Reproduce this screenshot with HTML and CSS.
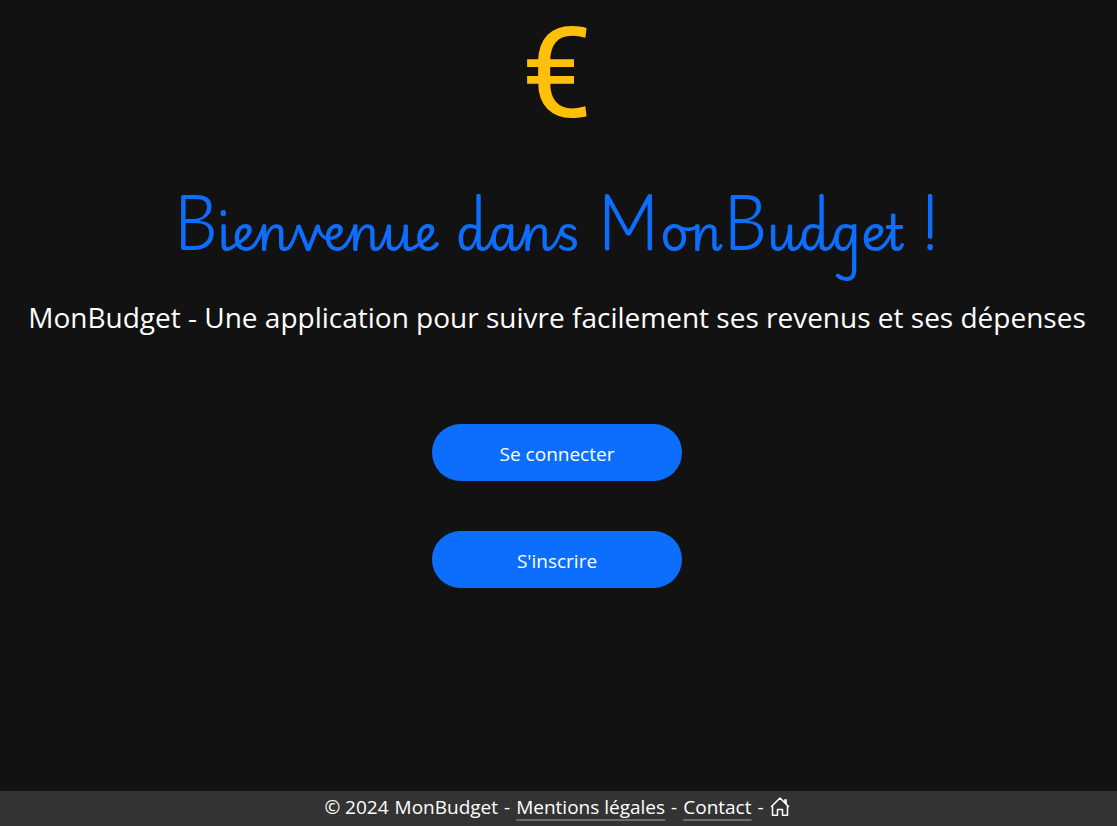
FILE: index.html
```html
<!DOCTYPE html>
<html lang="fr">
<head>
<meta charset="utf-8">
<meta name="viewport" content="width=device-width, initial-scale=1">
<title>MonBudget</title>
<link rel="stylesheet" href="styles.css">
</head>
<body>
<main class="home">
  <div class="logo">€</div>
  <h1 class="title">Bienvenue dans MonBudget !</h1>
  <p class="tagline">MonBudget - Une application pour suivre facilement ses revenus et ses dépenses</p>
  <div class="actions">
    <button type="button" class="button">Se connecter</button>
    <button type="button" class="button">S'inscrire</button>
  </div>
</main>
<footer class="footer">
  <span>© 2024</span>
  <span>MonBudget</span>
  <span>-</span>
  <a class="link" href="#mentions">Mentions légales</a>
  <span>-</span>
  <a class="link" href="#contact">Contact</a>
  <span>-</span>
  <a class="home-link" href="#accueil" aria-label="Accueil"><svg class="icon" viewBox="0 0 20 20" fill="none" stroke="currentColor" stroke-width="1.5" stroke-linejoin="round" stroke-linecap="round"><path d="M1.500 9.500 10 1l8.500 8.500M2.500 8.700V18.200H7.500V12.500H12.500V18.200H17.500V8.700"/><path d="M14.200 2.200H16.800V7.500L14.200 5Z" fill="currentColor" stroke="none"/></svg></a>
</footer>
</body>
</html>
```

FILE: styles.css
```css
* {
  box-sizing: border-box;
}

body {
  margin: 0;
  min-height: 100vh;
  display: flex;
  flex-direction: column;
  background: #121212;
  color: #fff;
  font-family: "Segoe UI", "Open Sans", "Noto Sans", sans-serif;
  font-size: 19px;
}

.home {
  flex: 1;
  display: flex;
  flex-direction: column;
  align-items: center;
  padding-right: 3px;
  text-align: center;
}

.logo {
  color: #ffc107;
  font-family: Roboto, sans-serif;
  font-size: 127px;
  line-height: 148px;
}

.title {
  margin: 20px 0 0;
  color: #0d6efd;
  font-family: "Playwrite FR Moderne", Lato, sans-serif;
  font-size: 50px;
  font-weight: 400;
  line-height: 116px;
}

.tagline {
  margin: 12px 0 0;
  font-size: 28px;
  line-height: 42px;
}

.actions {
  display: flex;
  flex-direction: column;
  gap: 50px;
  margin-top: 86px;
}

.button {
  width: 250px;
  height: 57px;
  padding: 3px 16px 0;
  border: 0;
  border-radius: 29px;
  background: #0d6efd;
  color: #fff;
  font: inherit;
}

.footer {
  display: flex;
  flex-wrap: wrap;
  align-items: center;
  justify-content: center;
  gap: 6px;
  min-height: 35px;
  padding: 0 3px 4px 0;
  background: #333;
  line-height: 26px;
}

.link {
  color: #fff;
  text-decoration: underline 2px #6c6c6c;
  text-decoration-skip-ink: none;
  text-underline-offset: 5px;
}

.home-link {
  display: flex;
  color: #fff;
}

.icon {
  width: 20px;
  height: 20px;
}
```
